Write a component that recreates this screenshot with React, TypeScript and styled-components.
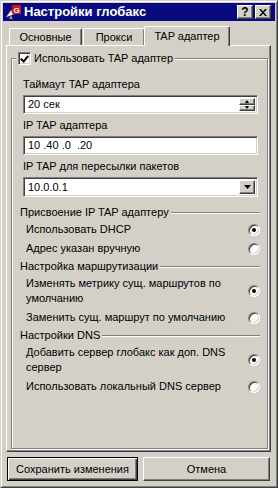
import styled, { createGlobalStyle } from "styled-components";

const face = "#d4d0c8";
const shade = "#808080";
const dark = "#404040";

const GlobalStyle = createGlobalStyle`
  html, body {
    margin: 0;
    padding: 0;
    background: ${face};
  }
  body {
    font-family: "Liberation Sans", Arial, sans-serif;
    font-size: 11px;
    color: #000;
  }
  * {
    box-sizing: border-box;
  }
`;

export default function App() {
  return (
    <>
      <GlobalStyle />
      <Window>
        <TitleBar>
          <AppIcon />
          <TitleText>Настройки глобакс</TitleText>
          <CaptionButton>?</CaptionButton>
          <CaptionButton>
            <svg width="8" height="7" viewBox="0 0 8 7">
              <path d="M0 0h2l2 2.5L6 0h2L5 3.5 8 7H6L4 4.5 2 7H0l3-3.5z" fill="#000" />
            </svg>
          </CaptionButton>
        </TitleBar>

        <Main>
          <TabStrip>
            <Tab $width={73}>Основные</Tab>
            <Tab $width={62}>Прокси</Tab>
            <Tab $width={86} $active>
              TAP адаптер
            </Tab>
          </TabStrip>

          <Panel>
            <GroupBox>
              <Legend>
                <CheckBox $checked />
                <span>Использовать TAP адаптер</span>
              </Legend>

              <Field>
                <FieldLabel>Таймаут TAP адаптера</FieldLabel>
                <Input>
                  <InputText>20 сек</InputText>
                  <Spinner>
                    <SpinButton>
                      <Arrow $up />
                    </SpinButton>
                    <SpinButton>
                      <Arrow />
                    </SpinButton>
                  </Spinner>
                </Input>
              </Field>

              <Field>
                <FieldLabel>IP TAP адаптера</FieldLabel>
                <Input>
                  <InputText>10 .40 .0  .20</InputText>
                </Input>
              </Field>

              <Field>
                <FieldLabel>IP TAP для пересылки пакетов</FieldLabel>
                <Input $combo>
                  <InputText>10.0.0.1</InputText>
                  <DropButton>
                    <svg width="7" height="4" viewBox="0 0 7 4">
                      <path d="M0 0h7L3.5 4z" fill="#000" />
                    </svg>
                  </DropButton>
                </Input>
              </Field>

              <Section $first>Присвоение IP TAP адаптеру</Section>
              <RadioRow>
                <RadioLabel>Использовать DHCP</RadioLabel>
                <Radio $checked />
              </RadioRow>
              <RadioRow>
                <RadioLabel>Адрес указан вручную</RadioLabel>
                <Radio />
              </RadioRow>

              <Section>Настройка маршрутизации</Section>
              <RadioRow>
                <RadioLabel>Изменять метрику сущ. маршрутов по умолчанию</RadioLabel>
                <Radio $checked />
              </RadioRow>
              <RadioRow>
                <RadioLabel>Заменить сущ. маршрут по умолчанию</RadioLabel>
                <Radio />
              </RadioRow>

              <Section>Настройки DNS</Section>
              <RadioRow>
                <RadioLabel>Добавить сервер глобакс как доп. DNS сервер</RadioLabel>
                <Radio $checked />
              </RadioRow>
              <RadioRow>
                <RadioLabel>Использовать локальный DNS сервер</RadioLabel>
                <Radio />
              </RadioRow>
            </GroupBox>
          </Panel>

          <ButtonRow>
            <PushButton $default>Сохранить изменения</PushButton>
            <PushButton>Отмена</PushButton>
          </ButtonRow>
        </Main>
      </Window>
    </>
  );
}

function AppIcon() {
  return (
    <svg width="16" height="16" viewBox="0 0 16 16">
      <path d="M1 13 L6 6 L10 10 Z" fill="#c0c0c0" />
      <path d="M2 13 L6 8 L8 10 Z" fill="#ffffff" />
      <path d="M4 15 L6 11 L8 15 Z" fill="#909090" />
      <rect x="7" y="1" width="9" height="9" rx="1" fill="#d01818" />
      <text x="11.5" y="8.5" fontSize="8" fontWeight="bold" fill="#fff" textAnchor="middle" fontFamily="Liberation Sans, sans-serif">
        G
      </text>
    </svg>
  );
}

const Window = styled.div`
  width: 278px;
  height: 488px;
  padding: 2px;
  display: flex;
  flex-direction: column;
  background: ${face};
  border: 1px solid;
  border-color: ${face} ${dark} ${dark} ${face};
  box-shadow: inset 1px 1px #fff, inset -1px -1px ${shade};
`;

const TitleBar = styled.div`
  height: 18px;
  flex: 0 0 18px;
  display: flex;
  align-items: center;
  padding: 0 4px 0 2px;
  background: #0a0a80;
  color: #fff;
`;

const TitleText = styled.div`
  flex: 1;
  margin-left: 3px;
  font-size: 13px;
  font-weight: bold;
  line-height: 18px;
  white-space: nowrap;
`;

const CaptionButton = styled.div`
  width: 16px;
  height: 14px;
  margin-left: 2px;
  display: flex;
  align-items: center;
  justify-content: center;
  background: ${face};
  color: #000;
  font-size: 12px;
  font-weight: bold;
  line-height: 12px;
  border: 1px solid;
  border-color: #fff ${dark} ${dark} #fff;
  box-shadow: inset -1px -1px ${shade};

  &:first-of-type {
    margin-left: 0;
  }
`;

const Main = styled.div`
  flex: 1;
  display: flex;
  flex-direction: column;
  padding: 5px 4px 0 3px;
`;

const TabStrip = styled.div`
  height: 19px;
  display: flex;
  align-items: flex-end;
  padding-left: 3px;
  position: relative;
  z-index: 1;
`;

const Tab = styled.div<{ $width: number; $active?: boolean }>`
  width: ${({ $width }) => $width}px;
  height: ${({ $active }) => ($active ? 20 : 17)}px;
  margin: ${({ $active }) => ($active ? "0 -2px -1px -2px" : "0 1px 0 0")};
  display: flex;
  align-items: center;
  justify-content: center;
  padding-bottom: ${({ $active }) => ($active ? 1 : 0)}px;
  background: ${face};
  white-space: nowrap;
  border-top: 1px solid #fff;
  border-left: 1px solid #fff;
  border-right: 1px solid ${dark};
  border-radius: 2px 2px 0 0;
  box-shadow: inset -1px 0 ${shade};
`;

const Panel = styled.div`
  height: 407px;
  flex: 0 0 407px;
  display: flex;
  flex-direction: column;
  padding: 12px 2px 2px 4px;
  border: 1px solid;
  border-color: #fff ${dark} ${dark} #fff;
  box-shadow: inset -1px -1px ${shade};
`;

const GroupBox = styled.div`
  flex: 1;
  display: flex;
  flex-direction: column;
  padding: 0 7px 0 8px;
  border: 1px solid ${shade};
  box-shadow: inset 1px 1px #fff, 1px 1px #fff;
`;

const Legend = styled.div`
  align-self: flex-start;
  height: 13px;
  margin: -7px 0 0 -4px;
  padding: 0 2px;
  display: flex;
  align-items: center;
  gap: 3px;
  background: ${face};
  line-height: 13px;
  white-space: nowrap;
`;

const CheckBox = styled.span<{ $checked?: boolean }>`
  width: 13px;
  height: 13px;
  flex: 0 0 13px;
  background: #fff;
  border: 1px solid;
  border-color: ${shade} #fff #fff ${shade};
  box-shadow: inset 1px 1px ${dark}, inset -1px -1px ${face};
  position: relative;

  &::after {
    content: "";
    display: ${({ $checked }) => ($checked ? "block" : "none")};
    position: absolute;
    left: 2px;
    top: 1px;
    width: 3px;
    height: 6px;
    border: solid #000;
    border-width: 0 2px 2px 0;
    transform: translate(1px, 0) rotate(40deg);
  }
`;

const Field = styled.div`
  display: flex;
  flex-direction: column;
  margin: 12px 2px 0 3px;

  & + & {
    margin-top: 4px;
  }
`;

const FieldLabel = styled.div`
  line-height: 14px;
  margin-bottom: 4px;
  white-space: nowrap;
`;

const Input = styled.div<{ $combo?: boolean }>`
  height: ${({ $combo }) => ($combo ? 20 : 19)}px;
  display: flex;
  align-items: center;
  padding: 2px;
  background: #fff;
  border: 1px solid;
  border-color: ${shade} #fff #fff ${shade};
  box-shadow: inset 1px 1px ${dark}, inset -1px -1px ${face};
`;

const InputText = styled.div`
  flex: 1;
  padding-left: 2px;
  white-space: pre;
  line-height: 13px;
`;

const Spinner = styled.div`
  width: 16px;
  height: 100%;
  display: flex;
  flex-direction: column;
`;

const SpinButton = styled.div`
  flex: 1;
  display: flex;
  align-items: center;
  justify-content: center;
  background: ${face};
  border: 1px solid;
  border-color: #fff ${dark} ${dark} #fff;
  box-shadow: inset -1px -1px ${shade};
`;

const Arrow = styled.span<{ $up?: boolean }>`
  width: 0;
  height: 0;
  border-left: 2.5px solid transparent;
  border-right: 2.5px solid transparent;
  ${({ $up }) => ($up ? "border-bottom: 3px solid #000;" : "border-top: 3px solid #000;")}
`;

const DropButton = styled.div`
  width: 16px;
  height: 100%;
  display: flex;
  align-items: center;
  justify-content: center;
  background: ${face};
  border: 1px solid;
  border-color: #fff ${dark} ${dark} #fff;
  box-shadow: inset -1px -1px ${shade};
`;

const Section = styled.div<{ $first?: boolean }>`
  display: flex;
  align-items: center;
  gap: 2px;
  line-height: 15px;
  margin-top: ${({ $first }) => ($first ? 8 : 1)}px;
  white-space: nowrap;

  &::after {
    content: "";
    flex: 1;
    height: 0;
    border-top: 1px solid ${shade};
    border-bottom: 1px solid #fff;
  }
`;

const RadioRow = styled.div`
  display: flex;
  align-items: center;
  padding: 2px 0 2px 6px;
`;

const RadioLabel = styled.div`
  flex: 1;
  margin-right: 10px;
  line-height: 15px;
`;

const Radio = styled.span<{ $checked?: boolean }>`
  width: 12px;
  height: 12px;
  flex: 0 0 12px;
  border-radius: 50%;
  background: #fff;
  border: 1px solid;
  border-color: ${shade} #fff #fff ${shade};
  box-shadow: inset 1px 1px ${dark}, inset -1px -1px ${face};
  display: flex;
  align-items: center;
  justify-content: center;

  &::after {
    content: "";
    display: ${({ $checked }) => ($checked ? "block" : "none")};
    width: 4px;
    height: 4px;
    border-radius: 50%;
    background: #000;
  }
`;

const ButtonRow = styled.div`
  display: flex;
  gap: 5px;
  margin-top: 5px;
  padding: 0 1px 0 1px;
`;

const PushButton = styled.div<{ $default?: boolean }>`
  height: 24px;
  display: flex;
  align-items: center;
  justify-content: center;
  white-space: nowrap;
  background: ${face};
  ${({ $default }) =>
    $default
      ? `
    width: 131px;
    border: 1px solid #000;
    box-shadow: inset 1px 1px #fff, inset -1px -1px ${dark}, inset -2px -2px ${shade};
  `
      : `
    flex: 1;
    border: 1px solid;
    border-color: #fff ${dark} ${dark} #fff;
    box-shadow: inset -1px -1px ${shade};
  `}
`;
